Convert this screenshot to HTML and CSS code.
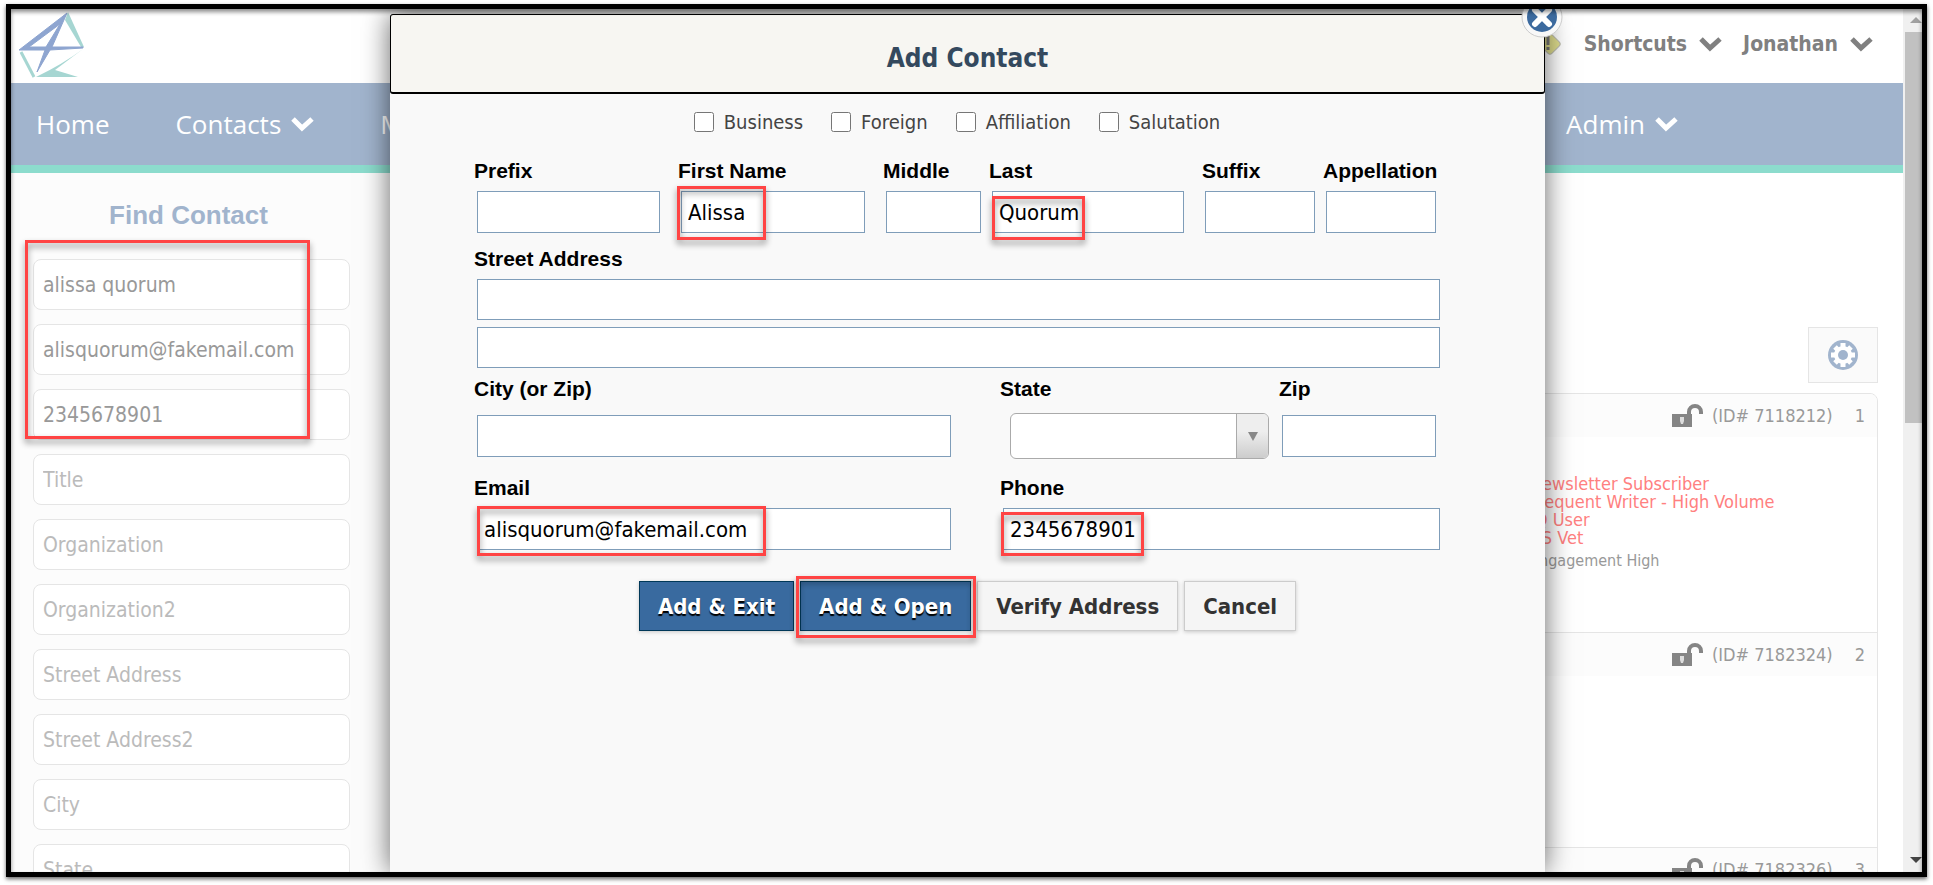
FILE: index.html
```html
<!DOCTYPE html>
<html lang="en">
<head>
  <meta charset="UTF-8">
  <meta name="viewport" content="width=device-width, initial-scale=1.0">
  <title>Add Contact</title>
  <link rel="stylesheet" href="styles.css">
</head>
<body>
  <div class="app">
    <div class="page">
      <header class="topbar">
        <a class="logo" href="#" aria-label="Dashboard">
          <svg width="66" height="66" viewBox="0 0 66 66">
            <path fill="#a6d6d2" d="M49 0 L65 35 L62 35 L46 8z"/>
            <path fill="#a6d6d2" d="M64 37 L36 58 Q46 61 59 65 L17 65 Q44 52 64 37z"/>
            <path fill="none" stroke="#a6d6d2" stroke-width="3" d="M2 40 L15 65"/>
            <path fill="#8ea5d0" stroke="#8ea5d0" stroke-width="1" stroke-linejoin="round" fill-rule="evenodd" d="M48 1 L0 38 L26 38 L18 60 L31 38 L64 36 L64 35 L33 35z M41 12 L27 35 L10 35z"/>
          </svg>
        </a>
        <div class="user-menu">
          <svg class="alert" width="26" height="26" viewBox="0 0 26 26">
            <rect x="5" y="5" width="16" height="16" rx="3" transform="rotate(45 13 13)" fill="#e0de8e" stroke="#bcbcae"/>
            <path stroke="#777" stroke-width="3" d="M11 5v9M11 16v3"/>
          </svg>
          <a href="#">Shortcuts
            <svg class="chevron" viewBox="0 0 23 16"><path d="M2 3 L11 12 L21 3"/></svg>
          </a>
          <a href="#">Jonathan
            <svg class="chevron" viewBox="0 0 23 16"><path d="M2 3 L11 12 L21 3"/></svg>
          </a>
        </div>
      </header>

      <nav class="nav">
        <a href="#">Home</a>
        <a href="#">Contacts
          <svg class="chevron" viewBox="0 0 23 16"><path d="M2 3 L11 12 L21 3"/></svg>
        </a>
        <a href="#">Mail</a>
        <a class="admin" href="#">Admin
          <svg class="chevron" viewBox="0 0 23 16"><path d="M2 3 L11 12 L21 3"/></svg>
        </a>
      </nav>

      <div class="main">
        <aside class="sidebar">
          <h2>Find Contact</h2>
          <div class="search-fields">
            <input type="text" aria-label="Name" value="alissa quorum">
            <input type="text" aria-label="Email" value="alisquorum@fakemail.com">
            <input type="text" aria-label="Phone" value="2345678901">
            <input type="text" aria-label="Title" placeholder="Title">
            <input type="text" aria-label="Organization" placeholder="Organization">
            <input type="text" aria-label="Organization2" placeholder="Organization2">
            <input type="text" aria-label="Street Address" placeholder="Street Address">
            <input type="text" aria-label="Street Address2" placeholder="Street Address2">
            <input type="text" aria-label="City" placeholder="City">
            <input type="text" aria-label="State" placeholder="State">
            <span class="mark mark-search"></span>
          </div>
        </aside>

        <section class="results">
          <button class="settings" type="button" aria-label="Settings">
            <svg width="30" height="30" viewBox="0 0 30 30">
              <circle cx="15" cy="15" r="15" fill="#a1b4cd"/>
              <circle cx="15" cy="15" r="9" fill="#fff"/>
              <path stroke="#fff" stroke-width="5" d="M15 3v24M3 15h24M7 7l16 16M23 7L7 23"/>
              <circle cx="15" cy="15" r="5" fill="#a1b4cd"/>
            </svg>
          </button>
          <div class="cards">
            <article class="card card-tall">
              <div class="card-head">
                <svg class="lock" viewBox="0 0 31 23"><path fill="#858585" d="M0 10h20v13H0z"/><path fill="none" stroke="#858585" stroke-width="4" d="M17 12V8a6 6 0 0 1 12 0v2"/><path fill="#ddd" d="M8 13h4v4l-1 3H9l-1-3z"/></svg>
                <span>(ID# 7118212)</span>
                <span>1</span>
              </div>
              <div class="tags">
                <p>Newsletter Subscriber</p>
                <p>Frequent Writer - High Volume</p>
                <p>IQ User</p>
                <p>US Vet</p>
                <p class="engagement">Engagement High</p>
              </div>
            </article>
            <article class="card">
              <div class="card-head">
                <svg class="lock" viewBox="0 0 31 23"><path fill="#858585" d="M0 10h20v13H0z"/><path fill="none" stroke="#858585" stroke-width="4" d="M17 12V8a6 6 0 0 1 12 0v2"/><path fill="#ddd" d="M8 13h4v4l-1 3H9l-1-3z"/></svg>
                <span>(ID# 7182324)</span>
                <span>2</span>
              </div>
            </article>
            <article class="card">
              <div class="card-head">
                <svg class="lock" viewBox="0 0 31 23"><path fill="#858585" d="M0 10h20v13H0z"/><path fill="none" stroke="#858585" stroke-width="4" d="M17 12V8a6 6 0 0 1 12 0v2"/><path fill="#ddd" d="M8 13h4v4l-1 3H9l-1-3z"/></svg>
                <span>(ID# 7182326)</span>
                <span>3</span>
              </div>
            </article>
          </div>
        </section>
      </div>

      <!-- Add Contact dialog -->
      <div class="dialog" role="dialog" aria-labelledby="dialog-title">
        <h1 id="dialog-title">Add Contact</h1>
        <button class="close" type="button" aria-label="Close">
          <svg width="42" height="42" viewBox="0 0 42 42">
            <circle cx="21" cy="21" r="20" fill="#f8f8f8" stroke="#ccc"/>
            <circle cx="21" cy="21" r="15" fill="#3c6a9e"/>
            <path stroke="#fff" stroke-width="6" stroke-linecap="round" d="M14 14l14 14M28 14L14 28"/>
          </svg>
        </button>
        <form>
          <div class="types">
            <label><input type="checkbox">Business</label>
            <label><input type="checkbox">Foreign</label>
            <label><input type="checkbox">Affiliation</label>
            <label><input type="checkbox">Salutation</label>
          </div>
          <div class="row row-name">
            <div class="field wide"><label for="prefix">Prefix</label><input id="prefix" type="text"></div>
            <div class="field wide">
              <label for="first">First Name</label><input id="first" type="text" value="Alissa">
              <span class="mark mark-first"></span>
            </div>
            <div class="field"><label for="middle">Middle</label><input id="middle" type="text"></div>
            <div class="field wide">
              <label for="last">Last</label><input id="last" type="text" value="Quorum">
              <span class="mark mark-last"></span>
            </div>
            <div class="field"><label for="suffix">Suffix</label><input id="suffix" type="text"></div>
            <div class="field narrow"><label for="appellation">Appellation</label><input id="appellation" type="text"></div>
          </div>
          <div class="row row-street">
            <div class="field full">
              <label for="street">Street Address</label>
              <input id="street" type="text">
              <input type="text" aria-label="Street Address line 2">
            </div>
          </div>
          <div class="row row-city">
            <div class="field half"><label for="city">City (or Zip)</label><input id="city" type="text"></div>
            <div class="field state">
              <label for="state">State</label>
              <div class="select">
                <select id="state"><option></option></select>
                <span class="select-arrow"><svg width="10" height="9" viewBox="0 0 10 9"><path fill="#888" d="M0 0h10L5 9z"/></svg></span>
              </div>
            </div>
            <div class="field narrow"><label for="zip">Zip</label><input id="zip" type="text"></div>
          </div>
          <div class="row row-email">
            <div class="field half">
              <label for="email">Email</label><input id="email" type="text" value="alisquorum@fakemail.com">
              <span class="mark mark-email"></span>
            </div>
            <div class="field full">
              <label for="phone">Phone</label><input id="phone" type="text" value="2345678901">
              <span class="mark mark-phone"></span>
            </div>
          </div>
          <div class="actions">
            <button class="btn primary" type="button">Add &amp; Exit</button>
            <div class="marked">
              <button class="btn primary" type="button">Add &amp; Open</button>
              <span class="mark mark-open"></span>
            </div>
            <button class="btn" type="button">Verify Address</button>
            <button class="btn" type="button">Cancel</button>
          </div>
        </form>
      </div>
    </div>

    <div class="scrollbar">
      <svg width="12" height="6" viewBox="0 0 12 6"><path fill="#a0a0a0" d="M0 6L6 0L12 6z"/></svg>
      <div class="thumb"></div>
      <svg width="12" height="6" viewBox="0 0 12 6"><path fill="#444" d="M0 0h12L6 6z"/></svg>
    </div>
  </div>
</body>
</html>
```
FILE: styles.css
```css
* {
  box-sizing: border-box;
}

body {
  margin: 0;
  padding: 4px 6px 8px;
  height: 100vh;
  background: #fff;
  font-family: "DejaVu Sans Condensed", "Noto Sans", sans-serif;
}

a {
  color: inherit;
  text-decoration: none;
}

h1, h2, p {
  margin: 0;
}

.app {
  display: flex;
  height: 100%;
  border: 5px solid #000;
  box-shadow: 0 2px 4px rgba(0, 0, 0, 0.6);
  overflow: hidden;
  position: relative;
}

/* Soft shade under the frame */
.app::after {
  content: "";
  position: absolute;
  inset: 0;
  box-shadow: inset 0 3px 4px rgba(0, 0, 0, 0.45);
  pointer-events: none;
}

.page {
  flex: 1;
  display: flex;
  flex-direction: column;
  position: relative;
  overflow: hidden;
}

.chevron {
  width: 23px;
  height: 16px;
  fill: none;
  stroke: currentColor;
  stroke-width: 5px;
}

/* Top bar */
.topbar {
  flex: none;
  display: flex;
  justify-content: space-between;
  height: 74px;
  padding: 3px 30px 0 8px;
}

.user-menu {
  display: flex;
  align-items: center;
  gap: 21px;
  height: 64px;
  color: #808080;
  font-size: 21px;
  font-weight: bold;
}

.user-menu a,
.nav a {
  display: flex;
  align-items: center;
  gap: 10px;
}

.user-menu a {
  gap: 12px;
}

/* Navigation */
.nav {
  flex: none;
  display: flex;
  align-items: center;
  gap: 66px;
  height: 90px;
  padding: 0 225px 0 25px;
  background: #a1b4cd;
  border-bottom: 8px solid #8cdccd;
  color: #fff;
  font-family: "Open Sans", sans-serif;
  font-size: 26px;
}

.nav .admin {
  margin-left: auto;
}

.main {
  flex: 1;
  display: flex;
}

/* Search sidebar */
.sidebar {
  width: 379px;
  padding: 26px 40px 0 22px;
  background: #fcfcfc;
}

.sidebar h2 {
  color: #a1b4cd;
  font: bold 26px/32px "Liberation Sans", sans-serif;
  text-align: center;
  padding-right: 6px;
}

.search-fields {
  display: flex;
  flex-direction: column;
  gap: 14px;
  margin-top: 28px;
  position: relative;
}

.search-fields input {
  width: 100%;
  height: 51px;
  padding: 0 9px;
  border: 1px solid #e5e5e5;
  border-radius: 8px;
  background: #fff;
  color: #999;
  font-family: inherit;
  font-size: 21px;
}

.search-fields input::placeholder {
  color: #bbb;
}

/* Results */
.results {
  flex: 1;
  display: flex;
  flex-direction: column;
  padding: 154px 25px 0 0;
}

.settings {
  align-self: flex-end;
  display: flex;
  align-items: center;
  justify-content: center;
  width: 70px;
  height: 56px;
  padding: 0;
  border: 1px solid #e5e5e5;
  background: #fafafa;
}

.cards {
  margin-top: 10px;
  border: 1px solid #e5e5e5;
  border-radius: 8px;
  overflow: hidden;
}

.card {
  height: 215px;
  border-bottom: 1px solid #e5e5e5;
}

.card-tall {
  height: 239px;
}

.card-head {
  display: flex;
  align-items: center;
  justify-content: flex-end;
  height: 43px;
  padding-right: 12px;
  background: #fcfcfc;
  color: #999;
  font-size: 18px;
}

.lock {
  width: 31px;
  height: 23px;
  margin-right: 9px;
}

.card-head span:last-child {
  margin-left: 22px;
}

.tags {
  width: 347px;
  margin: 38px 0 0 auto;
  color: #ff8080;
  font-size: 18px;
  line-height: 18px;
}

.tags .engagement {
  margin-top: 5px;
  color: #999;
  font-size: 16px;
}

/* Dialog */
.dialog {
  position: absolute;
  top: 5px;
  right: 358px;
  bottom: 0;
  left: 379px;
  background: #f9f9f9;
  box-shadow: 0 0 26px rgba(0, 0, 0, 0.6);
}

.dialog h1 {
  height: 80px;
  border: 1px solid #000;
  border-bottom-width: 2px;
  border-radius: 3px;
  background: #f7f6f2;
  color: #34495e;
  font-size: 26px;
  line-height: 86px;
  text-align: center;
}

.close {
  position: absolute;
  top: -18px;
  right: -18px;
  padding: 0;
  border: 0;
  background: none;
}

.close svg {
  display: block;
}

form {
  padding: 15px 105px 0 84px;
}

.types {
  display: flex;
  justify-content: center;
  gap: 28px;
  color: #444;
  font-size: 20px;
  line-height: 26px;
}

.types label {
  display: flex;
  align-items: center;
}

.types input {
  width: 20px;
  height: 20px;
  margin: 0 10px 0 0;
}

.row {
  display: grid;
}

.row-name {
  grid-template-columns: 204fr 205fr 106fr 213fr 121fr 117fr;
  margin-top: 23px;
}

.row-street {
  margin-top: 13px;
}

.row-city {
  grid-template-columns: 526fr 279fr 161fr;
  margin-top: 8px;
}

.row-email {
  grid-template-columns: 526fr 440fr;
  margin-top: 16px;
}

.field {
  min-width: 0;
  padding: 0 8px 0 3px;
  position: relative;
}

.field.wide {
  padding-right: 18px;
}

.field.half {
  padding-right: 49px;
}

.field.narrow {
  padding-right: 4px;
}

.field.full {
  padding-right: 0;
}

.field.state {
  padding: 0 10px;
}

.field label {
  display: block;
  margin-left: -3px;
  color: #000;
  font: bold 21px/26px "Liberation Sans", sans-serif;
}

.field.state label {
  margin-left: -10px;
}

.field input {
  display: block;
  width: 100%;
  height: 42px;
  margin-top: 7px;
  padding: 0 6px;
  border: 1px solid #7f9db9;
  background: #fff;
  color: #000;
  font-family: inherit;
  font-size: 22px;
}

.row-street input {
  height: 41px;
}

.row-city label {
  margin-bottom: 13px;
}

.row-city .state label {
  margin-bottom: 11px;
}

.select {
  position: relative;
}

.select select {
  display: block;
  width: 100%;
  height: 46px;
  border: 1px solid #aaa;
  border-radius: 6px;
  background: #fff;
  appearance: none;
}

.select-arrow {
  position: absolute;
  top: 1px;
  right: 1px;
  bottom: 1px;
  display: flex;
  align-items: center;
  justify-content: center;
  width: 32px;
  border-left: 1px solid #aaa;
  border-radius: 0 5px 5px 0;
  background: linear-gradient(#eee 40%, #ccc);
  pointer-events: none;
}

/* Centred on the dialog, not on the fields */
.actions {
  display: flex;
  justify-content: center;
  gap: 6px;
  margin: 31px -21px 0 0;
}

.marked {
  position: relative;
}

.btn {
  height: 50px;
  padding: 0 18px;
  border: 1px solid #ccc;
  background: #f5f5f5;
  box-shadow: 0 1px 4px rgba(0, 0, 0, 0.2);
  color: #333;
  font-family: inherit;
  font-size: 22px;
  font-weight: bold;
}

.btn.primary {
  border-color: #003858;
  background: #396a9f;
  color: #fff;
  text-shadow: 0 2px 1px #000;
}

/* Red callouts over the filled fields */
.mark {
  position: absolute;
  border: 3px solid #ff4444;
  filter: drop-shadow(0 4px 3px rgba(0, 0, 0, 0.45));
  pointer-events: none;
}

.mark-search {
  top: -19px;
  left: -8px;
  width: 285px;
  height: 199px;
}

.mark-first {
  top: 28px;
  left: -1px;
  width: 89px;
  height: 54px;
}

.mark-last {
  top: 38px;
  left: 3px;
  width: 93px;
  height: 44px;
}

.mark-email {
  top: 31px;
  left: 3px;
  width: 289px;
  height: 50px;
}

.mark-phone {
  top: 37px;
  left: 1px;
  width: 143px;
  height: 44px;
}

.mark-open {
  inset: -5px -5px -7px -4px;
}

/* Scrollbar */
.scrollbar {
  display: flex;
  flex-direction: column;
  align-items: center;
  width: 19px;
  padding: 8px 0 9px 2px;
  background: #f0f0f0;
}

.scrollbar svg {
  flex: none;
  margin-left: 4px;
}

.thumb {
  align-self: stretch;
  height: 391px;
  margin: 9px 0 auto;
  background: #c1c1c1;
}
```
